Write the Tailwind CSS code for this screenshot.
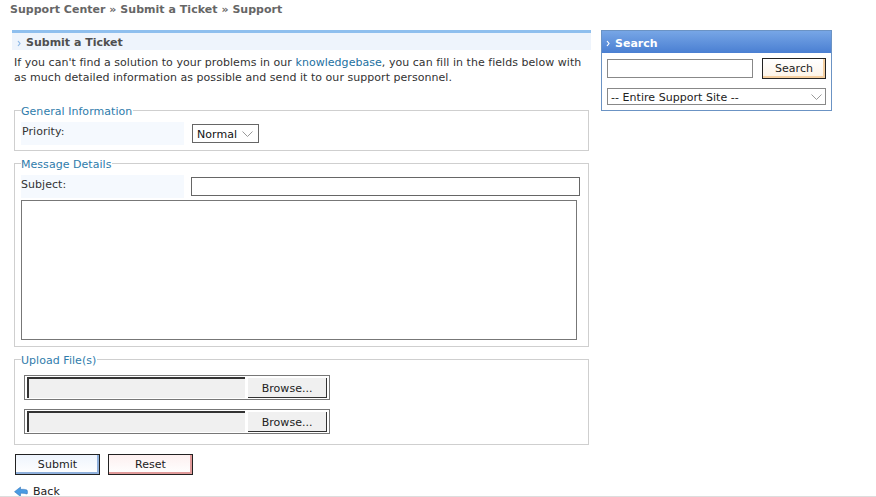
<!DOCTYPE html>
<html><head><meta charset="utf-8"><script src="https://cdn.jsdelivr.net/npm/@tailwindcss/browser@4"></script></head>
<body class="bg-white">
<div class="h-[497px] w-[876px] overflow-hidden border-b border-[#ddd] flex items-start font-['DejaVu_Sans','Verdana',sans-serif] text-[11px] leading-[15px] tracking-[0.04px] text-[#333]">
 <div class="w-[601px] shrink-0 h-[496px] relative">
  <div class="pl-[10px] pt-[2px] h-[30px] font-bold text-[#666] tracking-[0.03px]">Support Center » Submit a Ticket » Support</div>
  <div class="ml-[12px] w-[579px] h-[20px] border-t-[3px] border-[#8fbfee] bg-[#eef4fc] flex items-center pl-[5px] gap-[4px] font-bold text-[#4f4f4f] tracking-normal">
   <svg width="5" height="7" viewBox="0 0 5 7" class="mt-[3px]"><path d="M1 1l2 2.500L1 6" fill="none" stroke="#8db8e6" stroke-width="1.200"/></svg>
   <span class="pt-[2px]">Submit a Ticket</span>
  </div>
  <p class="ml-[14px] w-[575px] mt-[5px] leading-[15px] text-[#333]">If you can't find a solution to your problems in our <span class="text-[#22709f]">knowledgebase</span>, you can fill in the fields below with as much detailed information as possible and send it to our support personnel.</p>

  <fieldset class="ml-[14px] w-[575px] h-[47px] mt-[19px] border border-[#cfcfcf] pl-[6px]">
   <legend class="pr-[1px] text-[#2f7cab] leading-[15px] h-[13px]">General Information</legend>
   <div class="flex items-start mt-[5px]">
    <div class="w-[163px] h-[23px] bg-[#f5f9fe] pl-[1px] pt-[2px] text-[#333]">Priority:</div>
    <div class="ml-[8px] w-[67px] h-[19px] border border-[#666] flex items-center justify-between pl-[4px] pr-[5px] pt-[1px] text-[#111] bg-white mt-[2px]">
     <span>Normal</span>
     <svg width="11" height="6" viewBox="0 0 11 6"><path d="M.5.500l5 5 5-5" fill="none" stroke="#999"/></svg>
    </div>
   </div>
  </fieldset>

  <fieldset class="ml-[14px] w-[575px] h-[190px] mt-[6px] border border-[#cfcfcf] pl-[6px]">
   <legend class="text-[#2f7cab] pr-[1px] leading-[15px] h-[13px]">Message Details</legend>
   <div class="flex items-start mt-[5px]">
    <div class="w-[163px] h-[23px] bg-[#f5f9fe] pt-[2px] text-[#333]">Subject:</div>
    <div class="ml-[7px] w-[389px] h-[19px] border border-[#666] bg-white mt-[2px]"></div>
   </div>
   <div class="w-[556px] h-[140px] border border-[#777] bg-white mt-[2px]"></div>
  </fieldset>

  <fieldset class="ml-[14px] w-[575px] h-[92px] mt-[6px] border border-[#cfcfcf] pl-[6px]">
   <legend class="text-[#2f7cab] pr-[1px] leading-[15px] h-[13px]">Upload File(s)</legend>
   <div class="ml-[3px] mt-[9px] flex flex-col gap-[9px]">
    <div class="w-[306px] h-[25px] border border-[#777] flex items-center pl-[2px] pr-[2px] gap-[3px] bg-white">
     <div class="w-[219px] h-[21px] bg-[#f0f0f0] border-l-2 border-t-2 border-[#333]"></div>
     <div class="w-[79px] h-[20px] bg-[#f0f0f0] border-r border-b border-[#333] flex items-center justify-center text-[#222] pt-[2px]">Browse...</div>
    </div>
    <div class="w-[306px] h-[25px] border border-[#777] flex items-center pl-[2px] pr-[2px] gap-[3px] bg-white">
     <div class="w-[219px] h-[21px] bg-[#f0f0f0] border-l-2 border-t-2 border-[#333]"></div>
     <div class="w-[79px] h-[20px] bg-[#f0f0f0] border-r border-b border-[#333] flex items-center justify-center text-[#222] pt-[2px]">Browse...</div>
    </div>
   </div>
  </fieldset>

  <div class="ml-[15px] mt-[9px] flex gap-[8px]">
   <div class="w-[85px] h-[21px] border border-[#222] shadow-[inset_-2px_-2px_0_#8fb0dc] bg-[linear-gradient(#eef4fd,#fff)] flex items-center justify-center text-[#222]">Submit</div>
   <div class="w-[85px] h-[21px] border border-[#222] shadow-[inset_-2px_-2px_0_#e09a9a] bg-[linear-gradient(#fdf0f0,#fff)] flex items-center justify-center text-[#222]">Reset</div>
  </div>
  <div class="ml-[14px] mt-[9px] flex items-center gap-[5px] text-[#222]">
   <svg width="14" height="12" viewBox="0 0 14 12"><path d="M6.500 1v2.300q4 -.3 6.500 .7q.5 1 .5 2.500q0 1 -.5 1.500q-2.500 -1 -6.500 -.8V10.500L.5 5.700z" fill="#4a9be3" stroke="#2a6fb5" stroke-width=".5"/></svg>
   <span>Back</span>
  </div>
 </div>

 <div class="mt-[30px] w-[231px] h-[81px] border border-[#6b93c4] bg-white">
  <div class="h-[22px] bg-[linear-gradient(#77a6e6,#4a7fd2)] flex items-center pl-[4px] gap-[4px] font-bold text-white tracking-normal pt-[2px]">
   <svg width="5" height="7" viewBox="0 0 5 7"><path d="M1 1l2 2.500L1 6" fill="none" stroke="#fff" stroke-width="1.200"/></svg>
   <span>Search</span>
  </div>
  <div class="flex items-start pl-[5px] mt-[6px] gap-[9px]">
   <div class="w-[146px] h-[19px] border border-[#888] bg-white"></div>
   <div class="w-[64px] h-[21px] border border-[#222] bg-[linear-gradient(#fff,#fdf3e6)] shadow-[inset_-2px_-2px_0_#f5cfa0] flex items-center justify-center text-[#222] -mt-[1px]">Search</div>
  </div>
  <div class="ml-[5px] mt-[9px] w-[219px] h-[17px] border border-[#888] flex items-center justify-between pl-[3px] pr-[3px] pt-[1px] text-[#222]">
   <span>-- Entire Support Site --</span>
   <svg width="11" height="6" viewBox="0 0 11 6"><path d="M.5.500l5 5 5-5" fill="none" stroke="#999"/></svg>
  </div>
 </div>
</div>
</body></html>
